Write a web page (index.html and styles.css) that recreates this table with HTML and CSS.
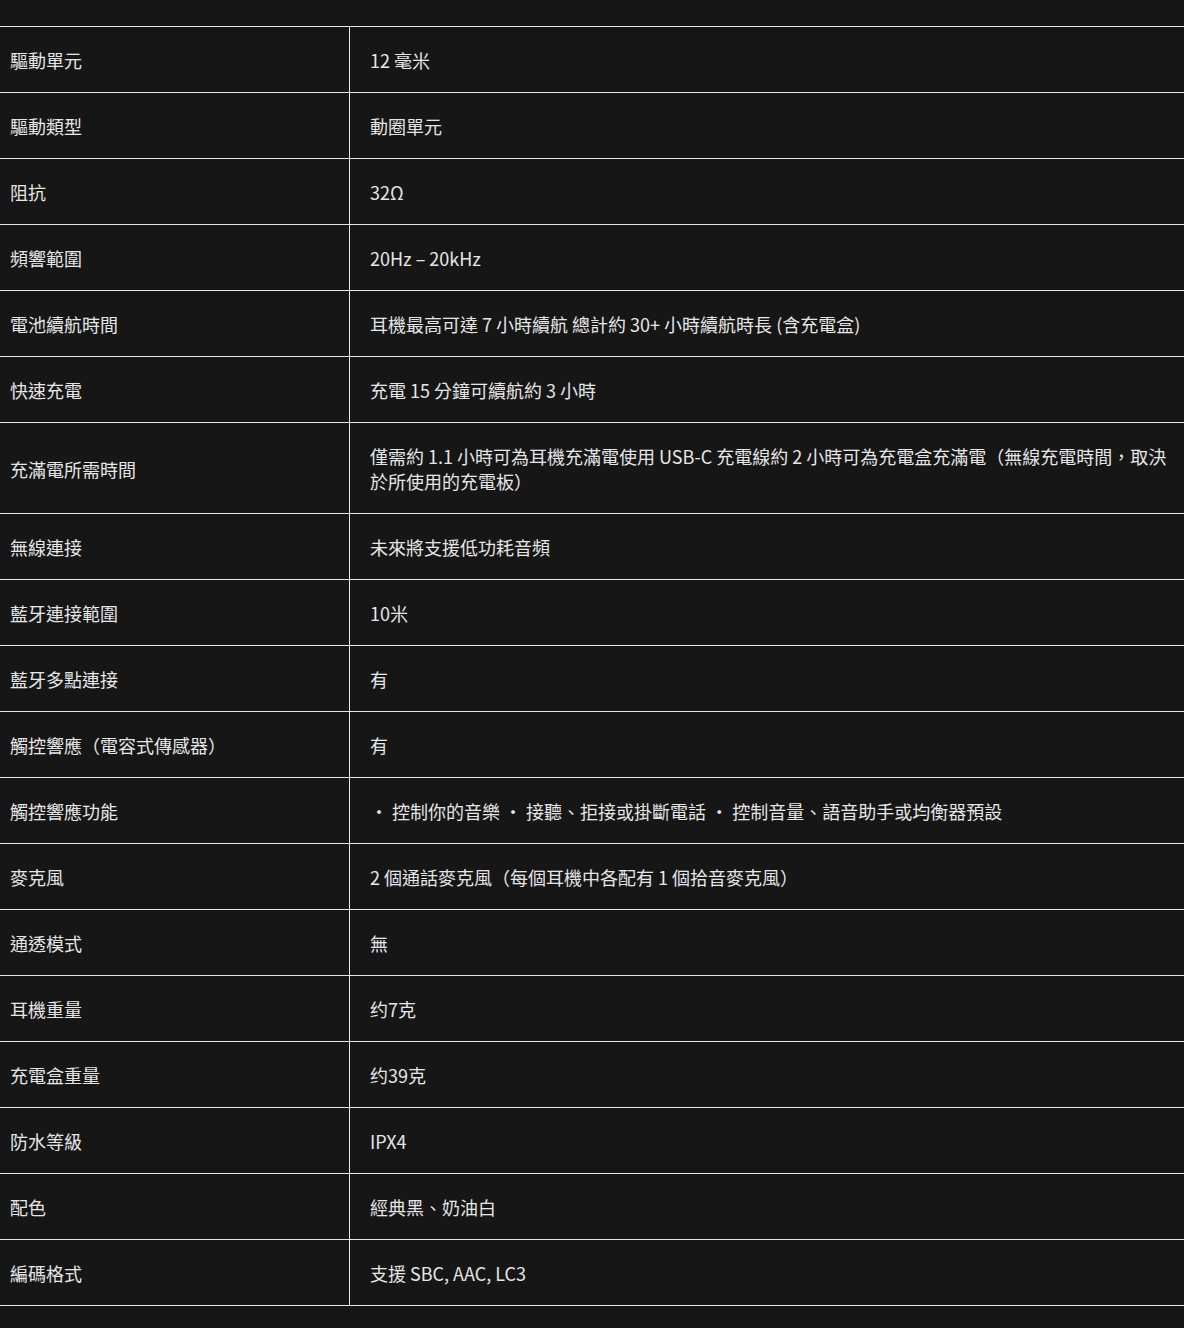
FILE: index.html
```html
<!DOCTYPE html>
<html lang="zh-Hant">
<head>
<meta charset="utf-8">
<title>規格</title>
<link rel="stylesheet" href="styles.css">
</head>
<body>
<div class="page">
<table class="specs">
<tbody>
<tr><th>驅動單元</th><td>12 毫米</td></tr>
<tr><th>驅動類型</th><td>動圈單元</td></tr>
<tr><th>阻抗</th><td>32Ω</td></tr>
<tr><th>頻響範圍</th><td>20Hz – 20kHz</td></tr>
<tr><th>電池續航時間</th><td>耳機最高可達 7 小時續航 總計約 30+ 小時續航時長 (含充電盒)</td></tr>
<tr><th>快速充電</th><td>充電 15 分鐘可續航約 3 小時</td></tr>
<tr><th>充滿電所需時間</th><td>僅需約 1.1 小時可為耳機充滿電使用 USB-C 充電線約 2 小時可為充電盒充滿電（無線充電時間，取決於所使用的充電板）</td></tr>
<tr><th>無線連接</th><td>未來將支援低功耗音頻</td></tr>
<tr><th>藍牙連接範圍</th><td>10米</td></tr>
<tr><th>藍牙多點連接</th><td>有</td></tr>
<tr><th>觸控響應（電容式傳感器）</th><td>有</td></tr>
<tr><th>觸控響應功能</th><td>・ 控制你的音樂 ・ 接聽、拒接或掛斷電話 ・ 控制音量、語音助手或均衡器預設</td></tr>
<tr><th>麥克風</th><td>2 個通話麥克風（每個耳機中各配有 1 個拾音麥克風）</td></tr>
<tr><th>通透模式</th><td>無</td></tr>
<tr><th>耳機重量</th><td>约7克</td></tr>
<tr><th>充電盒重量</th><td>约39克</td></tr>
<tr><th>防水等級</th><td>IPX4</td></tr>
<tr><th>配色</th><td>經典黑、奶油白</td></tr>
<tr><th>編碼格式</th><td>支援 SBC, AAC, LC3</td></tr>
</tbody>
</table>
</div>
</body>
</html>
```

FILE: styles.css
```css
html, body {
  margin: 0;
  padding: 0;
  background: #161616;
}
body {
  font-family: "Noto Sans CJK TC", "Noto Sans", sans-serif;
  color: #e6e6e6;
  font-size: 18px;
  line-height: 25px;
}
.page {
  padding: 26px 0 22px;
}
.specs {
  width: 100%;
  border-collapse: collapse;
}
.specs tr {
  border-top: 1px solid #e8e8e8;
  border-bottom: 1px solid #e8e8e8;
}
.specs th {
  width: 339px;
  text-align: left;
  font-weight: 400;
  padding: 21px 0 19px 10px;
  border-right: 1px solid #e8e8e8;
  vertical-align: middle;
}
.specs td {
  padding: 21px 2px 19px 20px;
  vertical-align: middle;
}
```
